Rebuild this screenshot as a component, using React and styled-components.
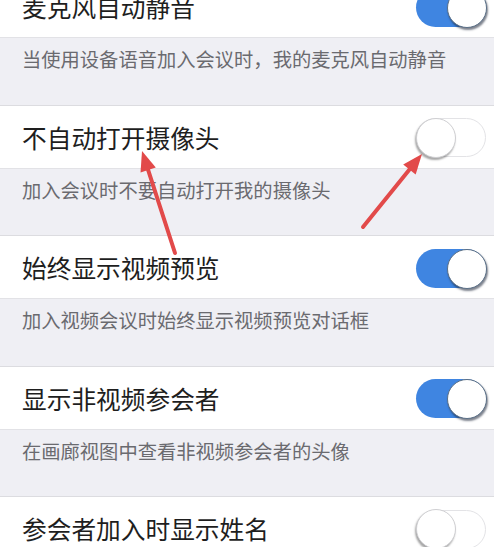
import React from "react";
import styled, { createGlobalStyle } from "styled-components";

const Global = createGlobalStyle`
  html, body { margin: 0; padding: 0; background: #ffffff; }
  body { font-family: "Noto Sans CJK SC", "Noto Sans", sans-serif; }
`;

const Page = styled.div`
  position: relative;
  width: 494px;
  height: 547px;
  overflow: hidden;
  background: #ffffff;
`;

const List = styled.div`
  display: flex;
  flex-direction: column;
  margin-top: -25px;
`;

const Row = styled.div`
  height: 62px;
  box-sizing: border-box;
  display: flex;
  align-items: center;
  justify-content: space-between;
  padding: 2px 8px 0 22px;
  background: #ffffff;
`;

const Title = styled.div`
  font-size: 24.7px;
  line-height: 1.2;
  color: #1e1e1e;
  letter-spacing: 0;
`;

const Desc = styled.div`
  height: 68.5px;
  box-sizing: border-box;
  padding: 10px 0 0 22px;
  background: #efeff4;
  border-top: 1px solid #e2e2e6;
  border-bottom: 1px solid #dcdce0;
  font-size: 19.3px;
  line-height: 23px;
  color: #6a6a6f;
`;

const Track = styled.div`
  position: relative;
  width: 70px;
  height: 39px;
  box-sizing: border-box;
  border-radius: 20px;
  background: ${(p) => (p.$on ? "#3f85e1" : "#ffffff")};
  border: ${(p) => (p.$on ? "none" : "1.5px solid #e3e3e6")};
  flex-shrink: 0;
`;

const Knob = styled.div`
  position: absolute;
  top: ${(p) => (p.$on ? "0px" : "-1.5px")};
  ${(p) => (p.$on ? "right: -1px;" : "left: -1.5px;")}
  width: 40px;
  height: 40px;
  box-sizing: border-box;
  border-radius: 50%;
  background: #ffffff;
  border: 1px solid ${(p) => (p.$on ? "#5a6f86" : "#cfcfd2")};
  box-shadow: ${(p) =>
    p.$on
      ? "1px 2px 2px rgba(20,30,50,0.55)"
      : "-1px 2px 2px rgba(0,0,0,0.35)"};
`;

const Overlay = styled.svg`
  position: absolute;
  left: 0;
  top: 0;
  width: 494px;
  height: 547px;
  pointer-events: none;
`;

const Toggle = ({ on }) => (
  <Track $on={on}>
    <Knob $on={on} />
  </Track>
);

const items = [
  { title: "麦克风自动静音", desc: "当使用设备语音加入会议时，我的麦克风自动静音", on: true },
  { title: "不自动打开摄像头", desc: "加入会议时不要自动打开我的摄像头", on: false },
  { title: "始终显示视频预览", desc: "加入视频会议时始终显示视频预览对话框", on: true },
  { title: "显示非视频参会者", desc: "在画廊视图中查看非视频参会者的头像", on: true },
  { title: "参会者加入时显示姓名", desc: null, on: false },
];

function Arrow({ x1, y1, x2, y2 }) {
  const dx = x2 - x1;
  const dy = y2 - y1;
  const len = Math.hypot(dx, dy);
  const ux = dx / len;
  const uy = dy / len;
  const hl = 20;
  const hw = 8;
  const bx = x2 - ux * hl;
  const by = y2 - uy * hl;
  const px = -uy;
  const py = ux;
  const pts = `${x2},${y2} ${bx + px * hw},${by + py * hw} ${bx - px * hw},${by - py * hw}`;
  return (
    <g>
      <line x1={x1} y1={y1} x2={bx + ux * 2} y2={by + uy * 2} stroke="#e24a4a" strokeWidth="4" strokeLinecap="round" />
      <polygon points={pts} fill="#e24a4a" />
    </g>
  );
}

export default function App() {
  return (
    <Page>
      <Global />
      <List>
        {items.map((it) => (
          <React.Fragment key={it.title}>
            <Row>
              <Title>{it.title}</Title>
              <Toggle on={it.on} />
            </Row>
            {it.desc && <Desc>{it.desc}</Desc>}
          </React.Fragment>
        ))}
      </List>
      <Overlay viewBox="0 0 494 547">
        <Arrow x1={175} y1={253} x2={142} y2={151} />
        <Arrow x1={363} y1={227} x2={422} y2={154} />
      </Overlay>
    </Page>
  );
}
